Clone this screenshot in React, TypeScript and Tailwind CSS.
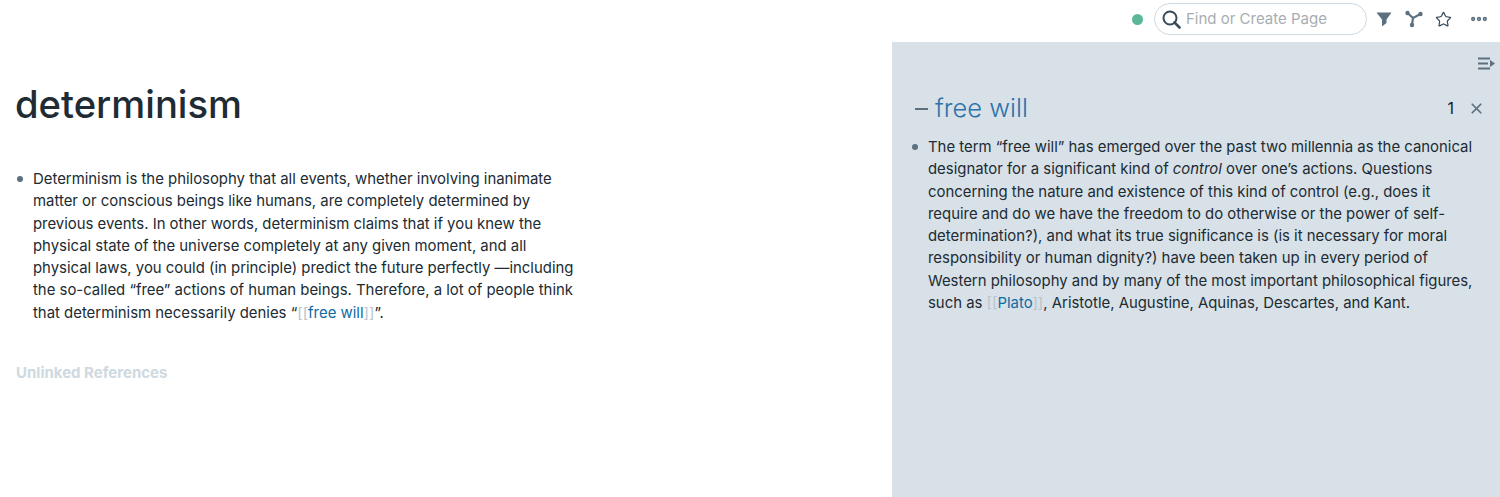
import { MoreHorizontal, Star, X } from "lucide-react";

function Ref({ label }: { label: string }) {
  return (
    <span>
      <span className="text-[#b8c4cc]">[[</span>
      <span className="text-[#106ba3]">{label}</span>
      <span className="text-[#b8c4cc]">]]</span>
    </span>
  );
}

function Bullet({ children }: { children: React.ReactNode }) {
  return (
    <div className="flex">
      <div className="w-[18px] shrink-0 pt-[8px] pl-[1.5px]">
        <div className="w-[6px] h-[6px] rounded-full bg-[#5c7080]" />
      </div>
      <div className="flex-1 text-[14.9px] leading-[22.25px] text-[#202b33]">{children}</div>
    </div>
  );
}

function TopBar() {
  return (
    <div className="h-[42px] pb-[4px] flex items-center justify-end pr-[11px]">
      <div className="w-[11px] h-[11px] rounded-full bg-[#5bb795]" />
      <div className="ml-[11px] w-[213px] h-[32px] rounded-full border border-[#ced9e0] flex items-center pl-[7px]">
        <svg width="19" height="19" viewBox="0 0 19 19" fill="none" stroke="#394b59" strokeWidth="2">
          <circle cx="8" cy="8" r="6.5" />
          <path d="M12.5 12.5 L17.5 17.5" strokeLinecap="round" strokeWidth="2.6" />
        </svg>
        <span className="ml-[5px] text-[15px] text-[#a8adb2]">Find or Create Page</span>
      </div>
      <svg className="ml-[9px]" width="16" height="16" viewBox="0 0 16 16" fill="#5c7080">
        <path d="M0.5 1.5 H15.5 L10.5 8.5 V12 L6 15.5 V8.5 Z" />
      </svg>
      <svg className="ml-[13px]" width="18" height="18" viewBox="0 0 18 18" fill="none" stroke="#5c7080" strokeWidth="2.2">
        <path d="M2.5 3 L8 8 L15.5 4 M8 8 L7 15" />
        <circle cx="2.5" cy="3" r="2.2" fill="#5c7080" stroke="none" />
        <circle cx="15.5" cy="4" r="2.2" fill="#5c7080" stroke="none" />
        <circle cx="7" cy="15" r="2.2" fill="#5c7080" stroke="none" />
      </svg>
      <Star className="ml-[12px]" size={17} color="#394b59" strokeWidth={1.7} />
      <MoreHorizontal className="ml-[17px]" size={20} color="#5c7080" strokeWidth={3.2} />
    </div>
  );
}

function Sidebar() {
  return (
    <div className="w-[608px] shrink-0 bg-[#d8e1e8] pt-[14px] pl-[18px] pr-[5px] h-[455px]">
      <div className="flex justify-end">
        <svg width="18" height="16" viewBox="0 0 18 16" fill="none" stroke="#5c7080" strokeWidth="2">
          <path d="M1 2.5 H13 M1 7.5 H11 M1 12.5 H13" />
          <path d="M13 4 L18 7.5 L13 11 Z" fill="#5c7080" stroke="none" />
        </svg>
      </div>
      <div className="mt-[20px] flex items-center justify-between h-[32px] pl-[5px] pr-[7px]">
        <div className="flex items-center gap-[7px] text-[25.5px] font-light text-[#2d72a8]">
          <div className="w-[13px] h-[2px] mt-[2px] bg-[#5c7080]" />
          <span>free will</span>
        </div>
        <div className="flex items-center pr-[3px]">
          <span className="text-[16px] text-[#182026]">1</span>
          <X className="ml-[14px]" size={17} color="#5c7080" strokeWidth={2.4} />
        </div>
      </div>
      <div className="mt-[12px] pr-[19px]">
        <Bullet>
          The term “free will” has emerged over the past two millennia as the canonical designator for a significant kind of <em>control</em> over one’s actions. Questions concerning the nature and existence of this kind of control (e.g., does it require and do we have the freedom to do otherwise or the power of self-determination?), and what its true significance is (is it necessary for moral responsibility or human dignity?) have been taken up in every period of Western philosophy and by many of the most important philosophical figures, such as <Ref label="Plato" />, Aristotle, Augustine, Aquinas, Descartes, and Kant.
        </Bullet>
      </div>
    </div>
  );
}

export default function App() {
  return (
    <div className="w-[1500px] h-[497px] overflow-hidden bg-white font-['Inter',sans-serif]">
      <TopBar />
      <div className="flex">
        <div className="flex-1 pl-[15px] pt-[35px]">
          <h1 className="text-[38.2px] leading-[54px] font-medium text-[#202b33]">determinism</h1>
          <div className="mt-[37px] w-[563px]">
            <Bullet>
              Determinism is the philosophy that all events, whether involving inanimate matter or conscious beings like humans, are completely determined by previous events. In other words, determinism claims that if you knew the physical state of the universe completely at any given moment, and all physical laws, you could (in principle) predict the future perfectly —including the so-called “free” actions of human beings. Therefore, a lot of people think that determinism necessarily denies “<Ref label="free will" />”.
            </Bullet>
          </div>
          <div className="mt-[38px] pl-[1px] text-[15px] font-bold text-[#ced9e0]">Unlinked References</div>
        </div>
        <Sidebar />
      </div>
    </div>
  );
}
